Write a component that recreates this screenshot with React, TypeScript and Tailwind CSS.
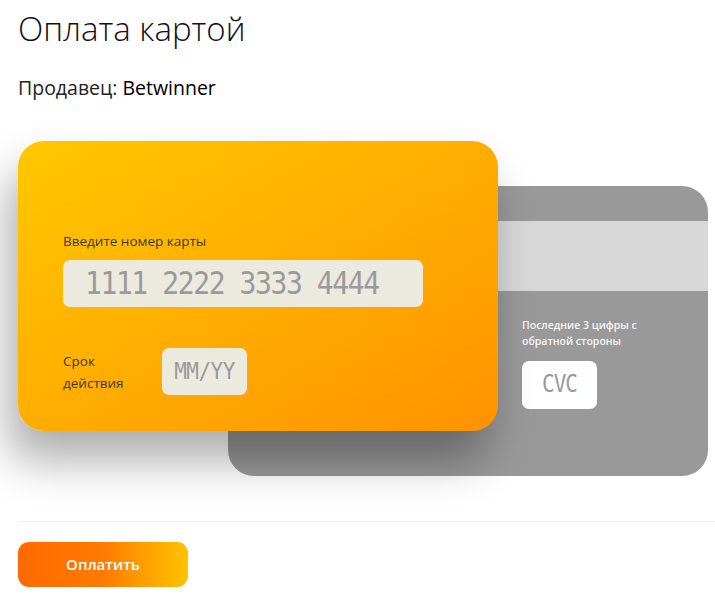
import React from "react";

const sans = "font-['Open_Sans','Noto_Sans',sans-serif]";
const mono = "font-['DejaVu_Sans_Mono','Liberation_Mono',monospace]";

function BackCard() {
  return (
    <div className="col-start-1 row-start-1 ml-[210px] mt-[45px] h-[290px] w-[480px] overflow-hidden rounded-[26px] bg-[#999999]">
      <div className="mt-[35px] h-[70px] bg-[#d8d8d8]" />
      <div className="pl-[294px] pt-[26px]">
        <p className={`${sans} text-[10.5px] font-semibold leading-[16px] text-white/95`}>
          Последние 3 цифры с
          <br />
          обратной стороны
        </p>
        <div
          className={`${mono} mt-[12px] flex h-[48px] w-[75px] items-center justify-center rounded-[7px] bg-white text-[21px] tracking-[-1px] text-[#9a9a9a]`}
        >
          <span className="scale-y-[1.15]">CVC</span>
        </div>
      </div>
    </div>
  );
}

function FrontCard() {
  return (
    <div className="relative z-10 col-start-1 row-start-1 h-[290px] w-[480px] rounded-[26px] bg-gradient-to-br from-[#ffc800] to-[#ff9200] px-[45px] pt-[92px] shadow-[-10px_30px_45px_rgba(0,0,0,0.32)]">
      <p className={`${sans} text-[13.5px] leading-[16px] text-[#3b3a22]`}>Введите номер карты</p>
      <div
        className={`${mono} mt-[11px] flex h-[47px] w-[360px] items-center rounded-[7px] bg-[#ece9df] pl-[22px] text-[28px] tracking-[-1.4px] text-[#9a9a9a]`}
      >
        <span className="scale-y-[1.12]">1111&nbsp;2222&nbsp;3333&nbsp;4444</span>
      </div>
      <div className="mt-[41px] flex items-center">
        <p className={`${sans} w-[99px] text-[13.5px] leading-[22px] text-[#3b3a22]`}>
          Срок
          <br />
          действия
        </p>
        <div
          className={`${mono} flex h-[47px] w-[85px] items-center justify-center rounded-[7px] bg-[#ece9df] text-[21px] tracking-[-0.5px] text-[#9a9a9a]`}
        >
          <span className="scale-y-[1.12]">MM/YY</span>
        </div>
      </div>
    </div>
  );
}

export default function App() {
  return (
    <div className={`${sans} min-h-[598px] w-[715px] bg-white pl-[18px] pt-[9px]`}>
      <h1 className="text-[33px] font-light leading-[40px] text-[#111]">Оплата картой</h1>
      <p className="mt-[27px] text-[19.5px] leading-[24px] text-[#222]">
        Продавец: <span className="font-medium text-black">Betwinner</span>
      </p>

      <div className="mt-[41px] grid">
        <BackCard />
        <FrontCard />
      </div>

      <div className="mt-[45px] h-px bg-[#eeeeee]" />

      <button className="mt-[20px] flex h-[45px] w-[170px] items-center justify-center rounded-[11px] bg-gradient-to-r from-[#ff6a00] via-[#ff7a00] to-[#ffc200] text-[15px] font-semibold text-white">
        Оплатить
      </button>
    </div>
  );
}
